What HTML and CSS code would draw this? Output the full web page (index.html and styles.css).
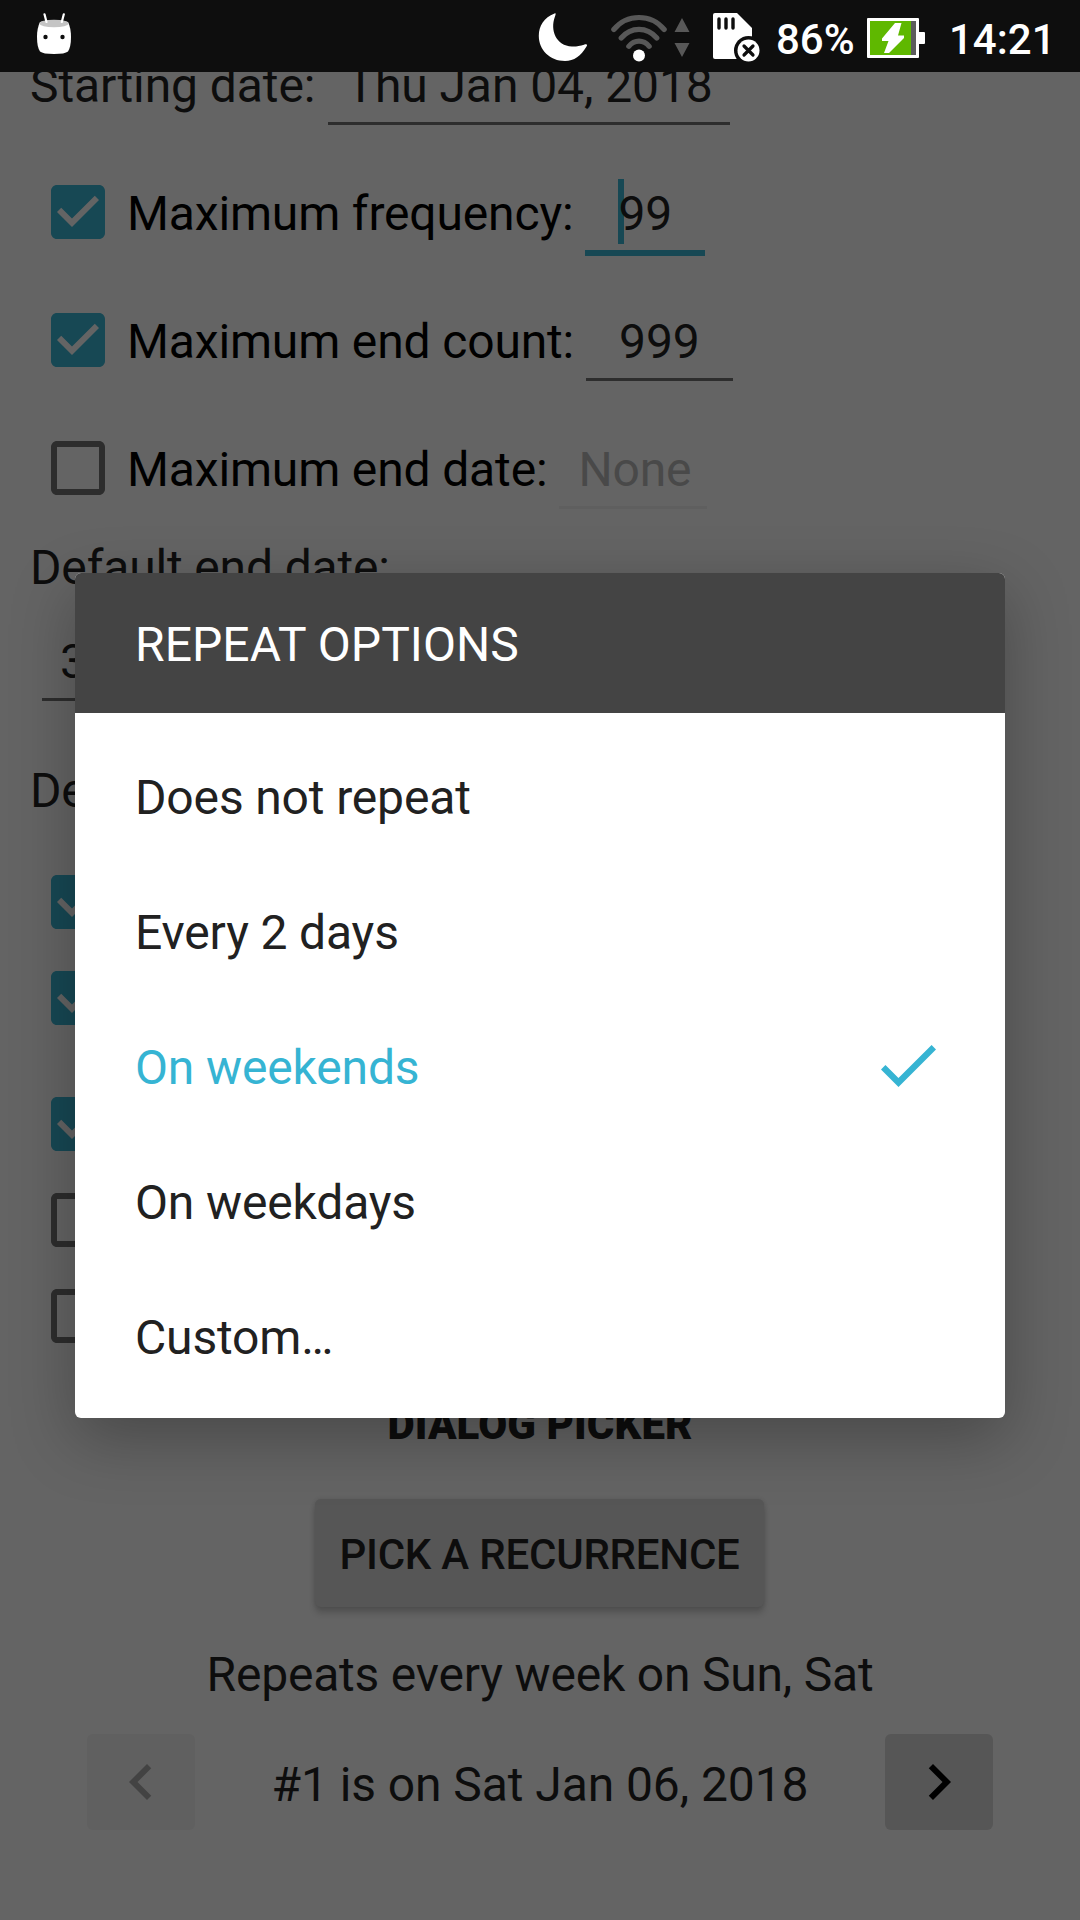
FILE: index.html
```html
<!DOCTYPE html>
<html lang="en">
<head>
<meta charset="utf-8">
<title>Recurrence picker</title>
<link rel="stylesheet" href="styles.css">
</head>
<body>
<svg class="defs" width="0" height="0" aria-hidden="true">
  <symbol id="box-on" viewBox="0 0 24 24"><path d="M19 3H5c-1.11 0-2 .9-2 2v14c0 1.1.89 2 2 2h14c1.11 0 2-.9 2-2V5c0-1.1-.89-2-2-2zm-9 14l-5-5 1.41-1.41L10 14.17l7.59-7.59L19 8l-9 9z"/></symbol>
  <symbol id="box-off" viewBox="0 0 24 24"><path d="M19 5v14H5V5h14m0-2H5c-1.1 0-2 .9-2 2v14c0 1.1.9 2 2 2h14c1.1 0 2-.9 2-2V5c0-1.1-.9-2-2-2z"/></symbol>
</svg>
<div class="screen">
  <header class="status">
    <svg class="st-app" viewBox="0 0 34 42">
      <path d="M3 9 Q17 5 31 9 Q34 15 34 24 Q34 34 31 38.500 Q28 41 17 41 Q6 41 3 38.500 Q0 34 0 24 Q0 15 3 9z" fill="#fff"/>
      <ellipse cx="17" cy="10.500" rx="14.500" ry="3.800" fill="#c4c4c4"/>
      <path d="M7.500 1.300L9.500 9M26.800 1.300L24.800 9" stroke="#fff" stroke-width="2.200" stroke-linecap="round"/>
      <circle cx="8.500" cy="24" r="2.200" fill="#0e0e0e"/><circle cx="25.500" cy="24" r="2.200" fill="#0e0e0e"/>
    </svg>
    <svg class="st-moon" viewBox="0 0 50 50"><path d="M16.500 1.500C18.500.5 17.500 3 16.800 5C12 18 18 34 34 34.500C38 34.700 42 34 46 32.700C48.500 31.800 50 32.500 48.500 34.500C43 44 36 49 27 49C12 49 .8 38 .8 24C.8 14 6 5.500 16.500 1.500z" fill="#fff"/></svg>
    <svg class="st-wifi" viewBox="0 0 58 48">
      <g fill="none" stroke="#585858" stroke-width="5.200" stroke-linecap="round"><path d="M3.800 15.500C17 -.5 41 -.5 54.200 15.500"/><path d="M11.200 24C21 12.500 37 12.500 46.800 24"/><path d="M18.800 32.300C24.500 25.500 33.500 25.500 39.200 32.300"/></g>
      <circle cx="29" cy="41.500" r="6" fill="#fff"/>
    </svg>
    <svg class="st-data" viewBox="0 0 16 40"><path d="M8 0L15.500 14H.5zM.5 25H15.500L8 39z" fill="#585858"/></svg>
    <svg class="st-sd" viewBox="0 0 48 50">
      <path d="M2 1H24L39 16V47H2Q0 47 0 45V3Q0 1 2 1z" fill="#fff"/>
      <path d="M6 7v9M13 7v9M20 7v9" stroke="#0e0e0e" stroke-width="3.400" stroke-linecap="round"/>
      <circle cx="35.500" cy="38.500" r="14.500" fill="#0e0e0e"/><circle cx="35.500" cy="38.500" r="11" fill="#fff"/>
      <path d="M31 34l9 9M40 34l-9 9" stroke="#0e0e0e" stroke-width="3.200" stroke-linecap="round"/>
    </svg>
    <span class="st-pct">86%</span>
    <svg class="st-batt" viewBox="0 0 58 40">
      <rect width="52" height="40" rx="1" fill="#fff"/><rect x="51" y="14" width="7" height="12" rx="1" fill="#fff"/>
      <path d="M3 3h41v34H3z" fill="#5fb800"/><path d="M44 3h5v34h-5z" fill="#5c5c5c"/>
      <path d="M28 5H34.500L31 17.500H37V20L22 35H17L21.500 23H15V20.500z" fill="#fff"/>
    </svg>
    <span class="st-time">14:21</span>
  </header>
  <main class="page">
    <div class="row first"><span class="label">Starting date:</span><span class="field start">Thu Jan 04, 2018</span></div>
    <div class="row option"><svg class="check on"><use href="#box-on"/></svg><span class="label strong">Maximum frequency:</span><span class="field focus">99<i class="caret"></i></span></div>
    <div class="row option"><svg class="check on"><use href="#box-on"/></svg><span class="label strong">Maximum end count:</span><span class="field">999</span></div>
    <div class="row option"><svg class="check"><use href="#box-off"/></svg><span class="label strong">Maximum end date:</span><span class="field off">None</span></div>
    <div class="row heading">Default end date:</div>
    <div class="row amount"><span class="field count">3</span></div>
    <div class="row heading second">De</div>
    <div class="checks"><svg class="check on"><use href="#box-on"/></svg><svg class="check on"><use href="#box-on"/></svg></div>
    <div class="checks lower"><svg class="check on"><use href="#box-on"/></svg><svg class="check"><use href="#box-off"/></svg><svg class="check"><use href="#box-off"/></svg></div>
    <div class="section">DIALOG PICKER</div>
    <div class="pick">PICK A RECURRENCE</div>
    <div class="summary">Repeats every week on Sun, Sat</div>
    <div class="nav">
      <div class="arrow disabled"><svg viewBox="0 0 24 24"><path d="M15.410 7.410L14 6l-6 6 6 6 1.410-1.410L10.830 12z"/></svg></div>
      <span class="occurrence">#1 is on Sat Jan 06, 2018</span>
      <div class="arrow"><svg viewBox="0 0 24 24"><path d="M10 6L8.590 7.410 13.170 12l-4.580 4.590L10 18l6-6z"/></svg></div>
    </div>
  </main>
  <section class="dialog">
    <h1 class="title">REPEAT OPTIONS</h1>
    <ul class="options">
      <li>Does not repeat</li>
      <li>Every 2 days</li>
      <li class="selected">On weekends<svg viewBox="3.410 5.590 17.590 13.410"><path d="M9 16.170L4.830 12l-1.420 1.410L9 19 21 7l-1.410-1.410z"/></svg></li>
      <li>On weekdays</li>
      <li>Custom…</li>
    </ul>
  </section>
</div>
</body>
</html>
```
FILE: styles.css
```css
* { box-sizing: border-box; }
body { margin: 0; background: #646464; font-family: Roboto, "Liberation Sans", sans-serif; }
.defs { display: block; }
.screen { position: relative; width: 1080px; height: 1920px; overflow: hidden; background: #646464; color: #0d0d0d; font-size: 48px; line-height: 56px; }

/* Status bar */
.status { display: flex; align-items: flex-start; height: 72px; background: #0e0e0e; color: #fff; font-size: 42px; font-weight: 500; line-height: 50px; white-space: nowrap; }
.status svg, .status span { flex: none; }
.st-app { width: 34px; height: 42px; margin: 13px 467px 0 37px; }
.st-moon { width: 50px; height: 50px; margin-top: 12px; }
.st-wifi { width: 58px; height: 48px; margin: 14px 0 0 22px; }
.st-data { width: 16px; height: 40px; margin: 18px 0 0 6px; }
.st-sd { width: 48px; height: 50px; margin: 12px 0 0 23px; }
.st-pct { width: 91px; margin: 15px 0 0 15px; }
.st-batt { width: 58px; height: 40px; margin-top: 18px; }
.st-time { margin: 15px 0 0 24px; }

/* Form behind the dialog */
.page { height: 1848px; overflow: hidden; }
.row { display: flex; align-items: center; height: 128px; padding-left: 30px; letter-spacing: -.15px; white-space: nowrap; }
.first { margin-top: -50px; letter-spacing: -.08px; }
.option { padding-left: 42px; }
.check { flex: none; display: block; width: 72px; height: 72px; margin-top: -4px; fill: #2d2d2d; }
.check.on { fill: #174854; }
.label.strong { color: #000; margin-left: 13px; }
.field { position: relative; height: 78px; margin-left: 12px; padding: 11px 33px 0; border-bottom: 3px solid #2d2d2d; }
.field.start { margin-left: 13px; padding: 11px 18px 0; width: 402px; }
.field.focus { border-color: #174854; box-shadow: 0 3px #174854; }
.field.off { width: 148px; color: #494949; border-color: #5f5f5f; padding: 11px 0 0 19px; }
.field.count { padding-left: 18px; }
.caret { position: absolute; left: 33px; top: 4px; width: 6px; height: 65px; background: #174854; z-index: -1; }
.focus { z-index: 0; }
.heading { height: 68px; }
.amount { height: 120px; }
.second { height: 132px; padding-top: 5px; }
.checks { padding-left: 42px; }
.checks .check { height: 96px; padding: 12px 0; margin: 0; }
.lower { margin-top: 30px; }
.section { height: 122px; font-size: 42px; font-weight: 900; line-height: 122px; letter-spacing: .1px; text-align: center; }
.pick { width: 449px; height: 108px; margin: 13px 0 0 315px; padding-top: 3px; border-radius: 6px; background: #565656; box-shadow: 0 6px 6px rgba(0,0,0,.18), 0 0 4px rgba(0,0,0,.12); font-size: 42px; font-weight: 500; line-height: 106px; letter-spacing: -.22px; text-align: center; }
.summary { height: 127px; padding-top: 8px; line-height: 119px; letter-spacing: -.2px; text-align: center; }
.nav { display: flex; justify-content: space-between; padding: 0 87px; }
.arrow { display: flex; align-items: center; justify-content: center; width: 108px; height: 96px; border-radius: 6px; background: #565656; }
.arrow svg { width: 72px; height: 72px; fill: #000; }
.arrow.disabled { background: #606060; }
.arrow.disabled svg { fill: #434343; }
.occurrence { padding-top: 5px; line-height: 91px; letter-spacing: -.08px; }

/* Dialog */
.dialog { position: absolute; left: 75px; top: 573px; width: 930px; height: 845px; border-radius: 6px; background: #fff; color: #212121; overflow: hidden; box-shadow: 0 20px 64px rgba(0,0,0,.28); }
.title { height: 140px; margin: 0; padding: 4px 60px 0; background: #444; color: #fff; font-size: 48px; font-weight: 400; line-height: 136px; letter-spacing: .06px; }
.options { list-style: none; margin: 0; padding: 17px 69px 0 60px; letter-spacing: -.15px; }
.options li { display: flex; align-items: center; justify-content: space-between; height: 135px; }
.options svg { width: 55px; height: 42px; margin-bottom: 3px; fill: #36b4d3; }
.options .selected { color: #36b4d3; }
```
